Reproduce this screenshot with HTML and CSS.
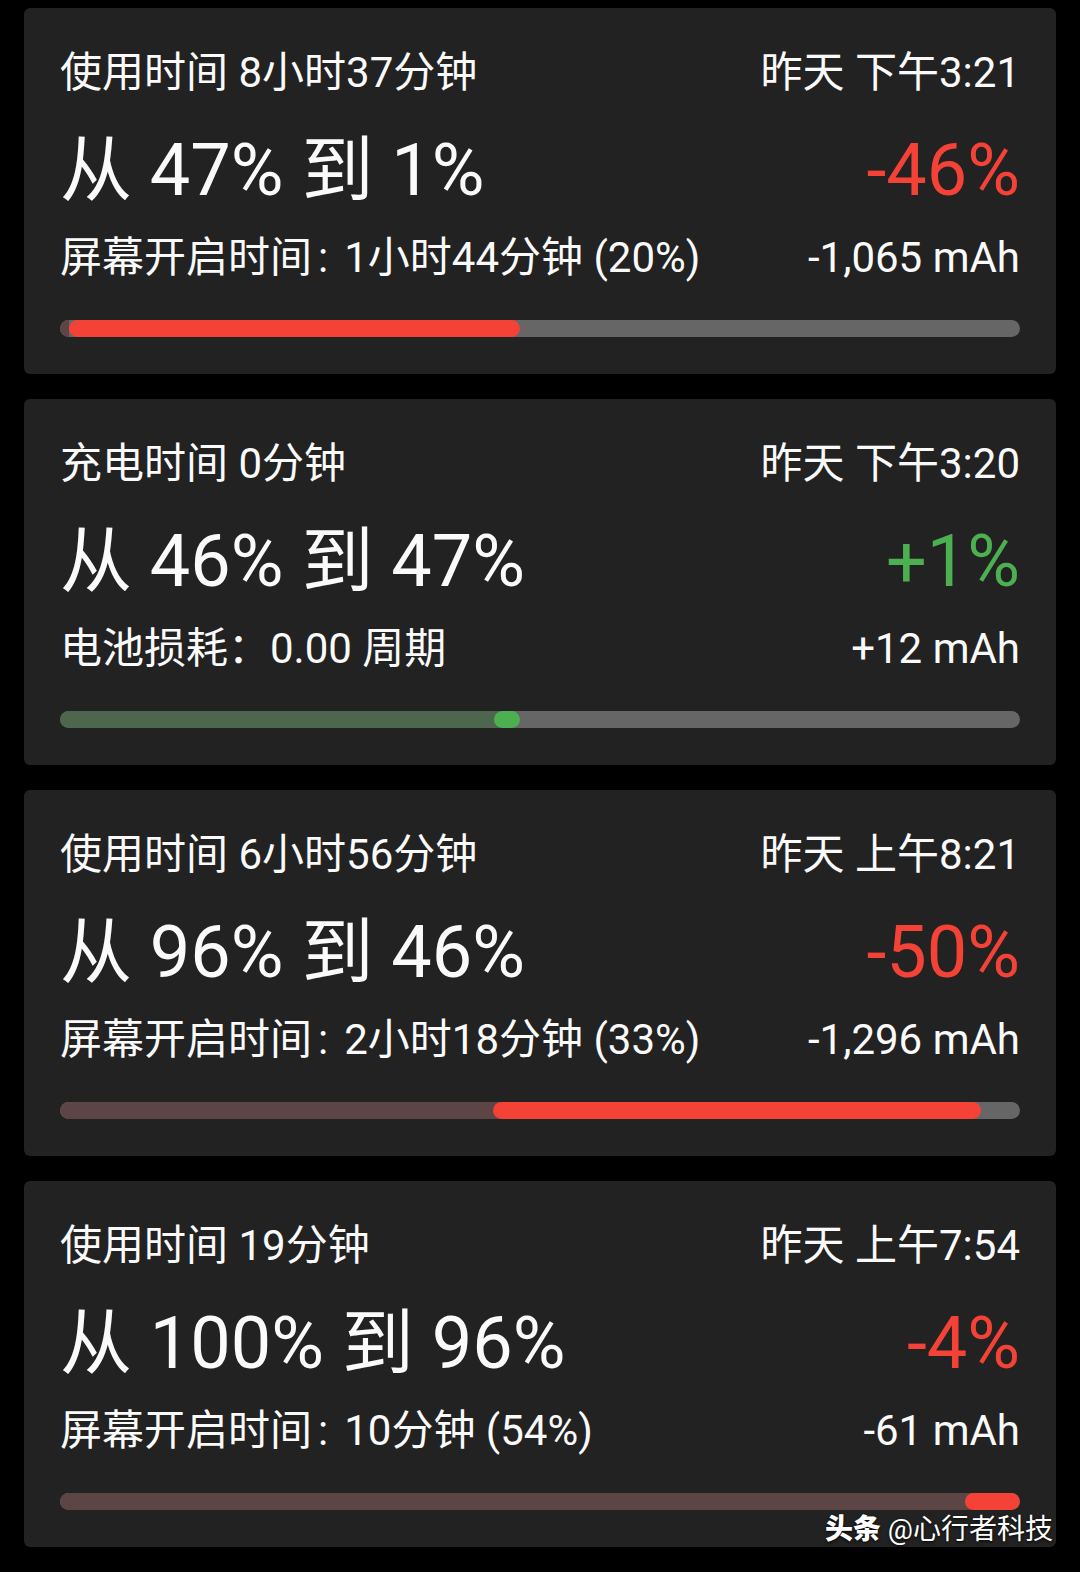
FILE: index.html
```html
<!DOCTYPE html>
<html lang="zh-CN">
<head>
    <meta charset="utf-8">
    <title>电池使用记录</title>
    <link rel="stylesheet" href="styles.css">
</head>
<body>
    <div class="list">
        <!-- discharge 47% -> 1% -->
        <div class="card">
            <div class="row row-top">
                <span>使用时间 8小时37分钟</span>
                <span>昨天 下午3:21</span>
            </div>
            <div class="row row-main">
                <span>从 47% 到 1%</span>
                <span class="loss">-46%</span>
            </div>
            <div class="row row-sub">
                <span>屏幕开启时间<span class="colon">:</span>1小时44分钟 (20%)</span>
                <span>-1,065 mAh</span>
            </div>
            <div class="track">
                <div class="seg seg-dim-red" style="width: 9px"></div>
                <div class="seg seg-red" style="left: 9px; width: 451px"></div>
            </div>
        </div>

        <!-- charge 46% -> 47% -->
        <div class="card">
            <div class="row row-top">
                <span>充电时间 0分钟</span>
                <span>昨天 下午3:20</span>
            </div>
            <div class="row row-main">
                <span>从 46% 到 47%</span>
                <span class="gain">+1%</span>
            </div>
            <div class="row row-sub">
                <span>电池损耗：0.00 周期</span>
                <span>+12 mAh</span>
            </div>
            <div class="track">
                <div class="seg seg-dim-green" style="width: 442px"></div>
                <div class="seg seg-green" style="left: 434px; width: 26px"></div>
            </div>
        </div>

        <!-- discharge 96% -> 46% -->
        <div class="card">
            <div class="row row-top">
                <span>使用时间 6小时56分钟</span>
                <span>昨天 上午8:21</span>
            </div>
            <div class="row row-main">
                <span>从 96% 到 46%</span>
                <span class="loss">-50%</span>
            </div>
            <div class="row row-sub">
                <span>屏幕开启时间<span class="colon">:</span>2小时18分钟 (33%)</span>
                <span>-1,296 mAh</span>
            </div>
            <div class="track">
                <div class="seg seg-dim-red" style="width: 442px"></div>
                <div class="seg seg-red" style="left: 433px; width: 488px"></div>
            </div>
        </div>

        <!-- discharge 100% -> 96% -->
        <div class="card">
            <div class="row row-top">
                <span>使用时间 19分钟</span>
                <span>昨天 上午7:54</span>
            </div>
            <div class="row row-main">
                <span>从 100% 到 96%</span>
                <span class="loss">-4%</span>
            </div>
            <div class="row row-sub">
                <span>屏幕开启时间<span class="colon">:</span>10分钟 (54%)</span>
                <span>-61 mAh</span>
            </div>
            <div class="track">
                <div class="seg seg-dim-red" style="width: 920px"></div>
                <div class="seg seg-red" style="left: 905px; width: 55px"></div>
            </div>
        </div>
    </div>

    <div class="watermark"><b>头条</b> @心行者科技</div>
</body>
</html>
```

FILE: styles.css
```css
html, body {
    margin: 0;
    padding: 0;
    background: #000;
}
body {
    position: relative;
    min-height: 1572px;
    font-family: Roboto, "Noto Sans CJK SC", sans-serif;
    color: #fafafa;
}
.list {
    padding: 8px 24px 0;
}
.card {
    background: #222222;
    border-radius: 6px;
    padding: 41px 36px 37px;
    margin-bottom: 25px;
}
.row {
    display: flex;
    justify-content: space-between;
    align-items: center;
    white-space: nowrap;
}
.row-top {
    font-size: 42px;
    line-height: 48px;
}
.row-main {
    font-size: 72px;
    line-height: 80px;
    margin-top: 34px;
}
.row-sub {
    font-size: 42px;
    line-height: 48px;
    margin-top: 23px;
}
/* the screen-time colon is narrower than a full-width one */
.colon {
    padding: 0 16px 0 6px;
}
.loss {
    color: #f44336;
}
.gain {
    color: #4caf50;
}
.track {
    position: relative;
    height: 17px;
    margin-top: 38px;
    background: #666666;
    border-radius: 9px;
    overflow: hidden;
}
.seg {
    position: absolute;
    top: 0;
    left: 0;
    height: 100%;
    border-radius: 9px;
}
.seg-dim-red {
    background: #5e4545;
    border-radius: 9px 0 0 9px;
}
.seg-dim-green {
    background: #4d664d;
    border-radius: 9px 0 0 9px;
}
.seg-red {
    background: #f44336;
}
.seg-green {
    background: #4caf50;
}
.watermark {
    position: absolute;
    right: 27px;
    top: 1510px;
    font-size: 28px;
    line-height: 40px;
    color: #fff;
    text-shadow: 0 1px 3px rgba(0, 0, 0, 0.9);
}
.watermark b {
    font-weight: 900;
}
```
